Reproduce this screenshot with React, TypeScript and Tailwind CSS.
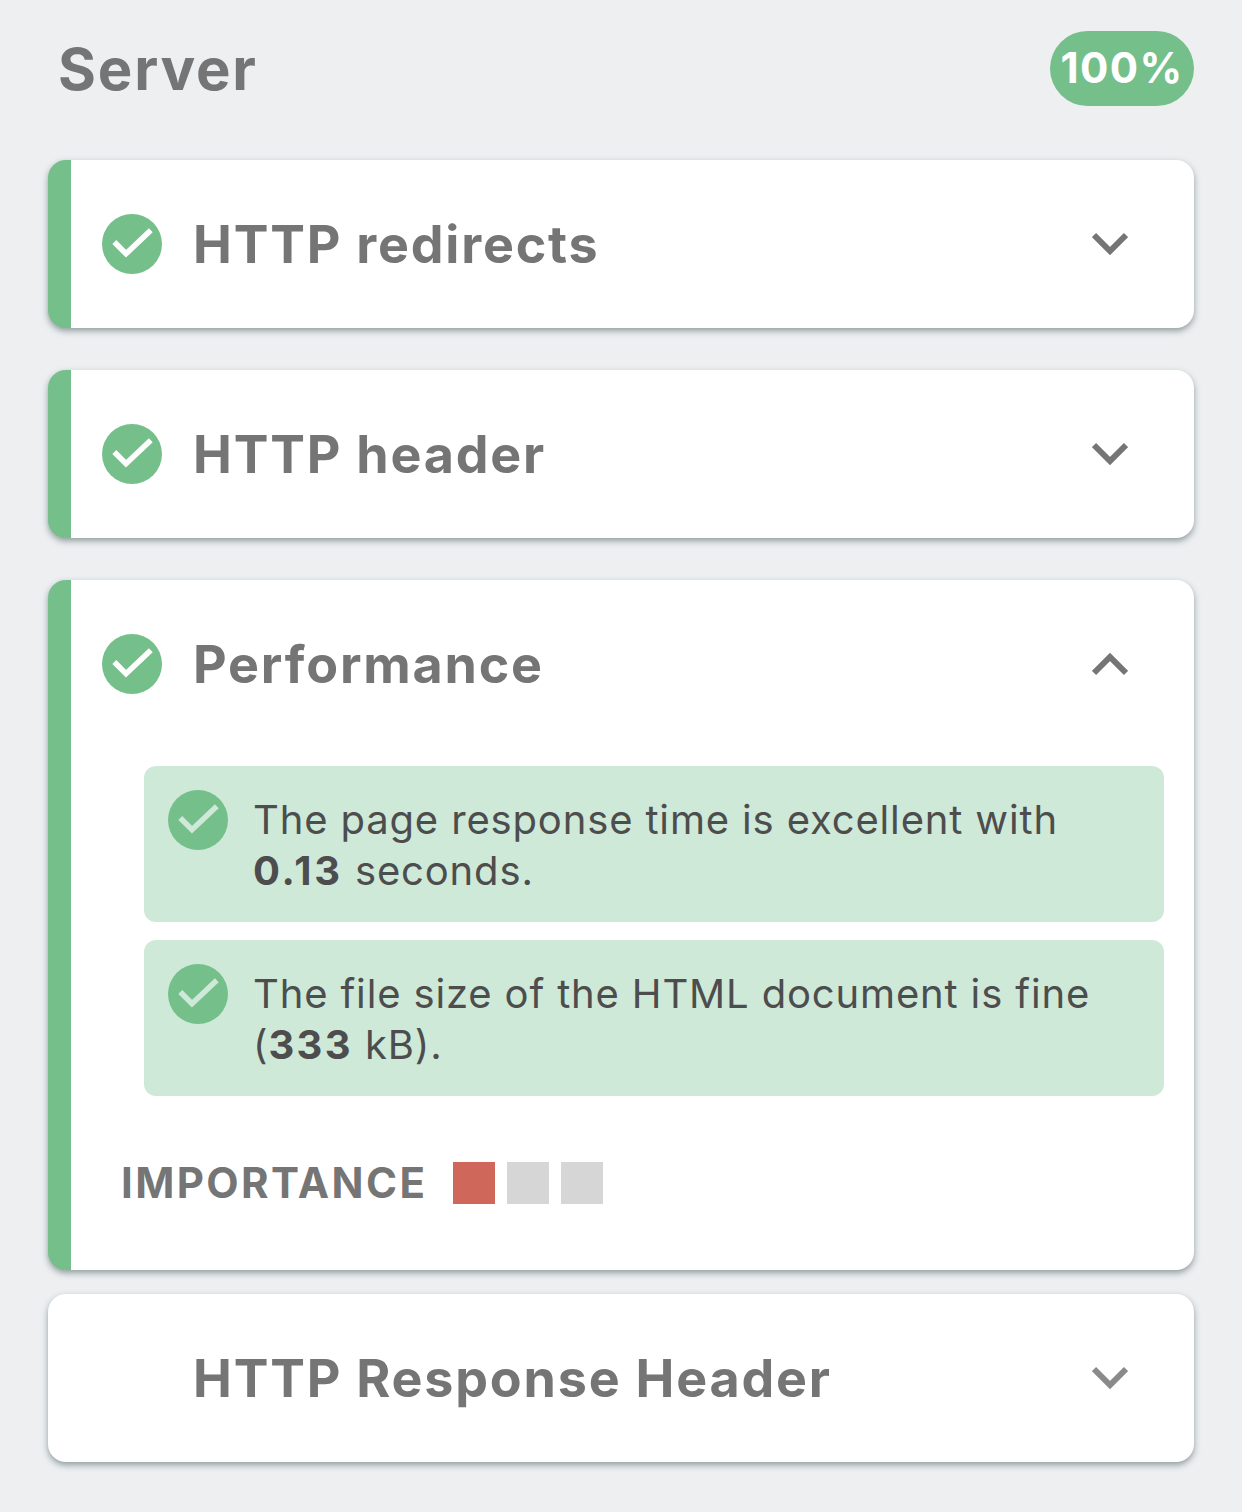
const font = { fontFamily: 'Inter, "Noto Sans", sans-serif' };

function CheckCircle({ check }: { check: string }) {
  return (
    <svg viewBox="0 0 60 60" className="h-[60px] w-[60px] shrink-0">
      <circle cx="30" cy="30" r="30" fill="#75bf8b" />
      <path d="M12.3 28 L24 39.7 L48.8 16.3" fill="none" stroke={check} strokeWidth="5.6" />
    </svg>
  );
}

function Chevron({ up, color = "#757575" }: { up?: boolean; color?: string }) {
  return (
    <svg viewBox="0 0 36 24" className="h-[24px] w-[36px]">
      <path d={up ? "M2 21 L18 5 L34 21" : "M2 3 L18 19 L34 3"} fill="none" stroke={color} strokeWidth="6" />
    </svg>
  );
}

function Header({ title, up, icon = true, chevron }: { title: string; up?: boolean; icon?: boolean; chevron?: string }) {
  return (
    <div className="flex h-[168px] items-center pl-[31px] pr-[66px]">
      <div className="w-[60px] shrink-0">{icon && <CheckCircle check="#ffffff" />}</div>
      <div className="ml-[31px] mt-[2px] flex-1 text-[52px] font-bold leading-none tracking-[1.8px] text-[#757575]">{title}</div>
      <Chevron up={up} color={chevron} />
    </div>
  );
}

function Notice({ children }: { children: React.ReactNode }) {
  return (
    <div className="flex h-[156px] rounded-[12px] bg-[#cfe9d9] pl-[24px] pt-[24px]">
      <CheckCircle check="#cfe9d9" />
      <div className="ml-[25px] mt-[4px] text-[40px] leading-[51px] tracking-[0.85px] text-[#4d4d4d]">{children}</div>
    </div>
  );
}

export default function App() {
  return (
    <div className="h-[1512px] w-[1242px] overflow-hidden bg-[#edeff1] px-[48px]" style={font}>
      <div className="flex h-[160px] items-start justify-between">
        <div className="ml-[10px] mt-[36px] text-[58px] font-bold leading-[66px] tracking-[1.8px] text-[#757575]">Server</div>
        <div className="mt-[31px] flex h-[75px] w-[144px] items-center justify-center rounded-full bg-[#75bf8b] pb-[2px] text-[42px] font-bold tracking-[1.4px] text-white">100%</div>
      </div>
      <div className="flex flex-col">
        <div className="mb-[42px] overflow-hidden rounded-[18px] border-l-[23px] border-[#75bf8b] bg-white shadow-[0_3px_6px_rgba(70,90,90,0.55)]">
          <Header title="HTTP redirects" />
        </div>
        <div className="mb-[42px] overflow-hidden rounded-[18px] border-l-[23px] border-[#75bf8b] bg-white shadow-[0_3px_6px_rgba(70,90,90,0.55)]">
          <Header title="HTTP header" />
        </div>
        <div className="mb-[24px] h-[690px] overflow-hidden rounded-[18px] border-l-[23px] border-[#75bf8b] bg-white shadow-[0_3px_6px_rgba(70,90,90,0.55)]">
          <Header title="Performance" up />
          <div className="ml-[73px] mr-[30px] mt-[18px] flex flex-col gap-[18px]">
            <Notice>
              The page response time is excellent with
              <br />
              <b className="font-bold tracking-[2.8px]">0.13</b> seconds.
            </Notice>
            <Notice>
              The file size of the HTML document is fine
              <br />(<b className="font-bold tracking-[2.3px]">333</b> kB).
            </Notice>
          </div>
          <div className="ml-[50px] mt-[66px] flex items-center">
            <span className="text-[42px] font-bold leading-[42px] tracking-[2.4px] text-[#757575]">IMPORTANCE</span>
            <span className="ml-[26px] h-[42px] w-[42px] bg-[#d0675b]" />
            <span className="ml-[12px] h-[42px] w-[42px] bg-[#d6d6d6]" />
            <span className="ml-[12px] h-[42px] w-[42px] bg-[#d6d6d6]" />
          </div>
        </div>
        <div className="overflow-hidden rounded-[18px] bg-white pl-[23px] shadow-[0_3px_6px_rgba(70,90,90,0.55)]">
          <Header title="HTTP Response Header" icon={false} chevron="#8a8a8a" />
        </div>
      </div>
    </div>
  );
}
